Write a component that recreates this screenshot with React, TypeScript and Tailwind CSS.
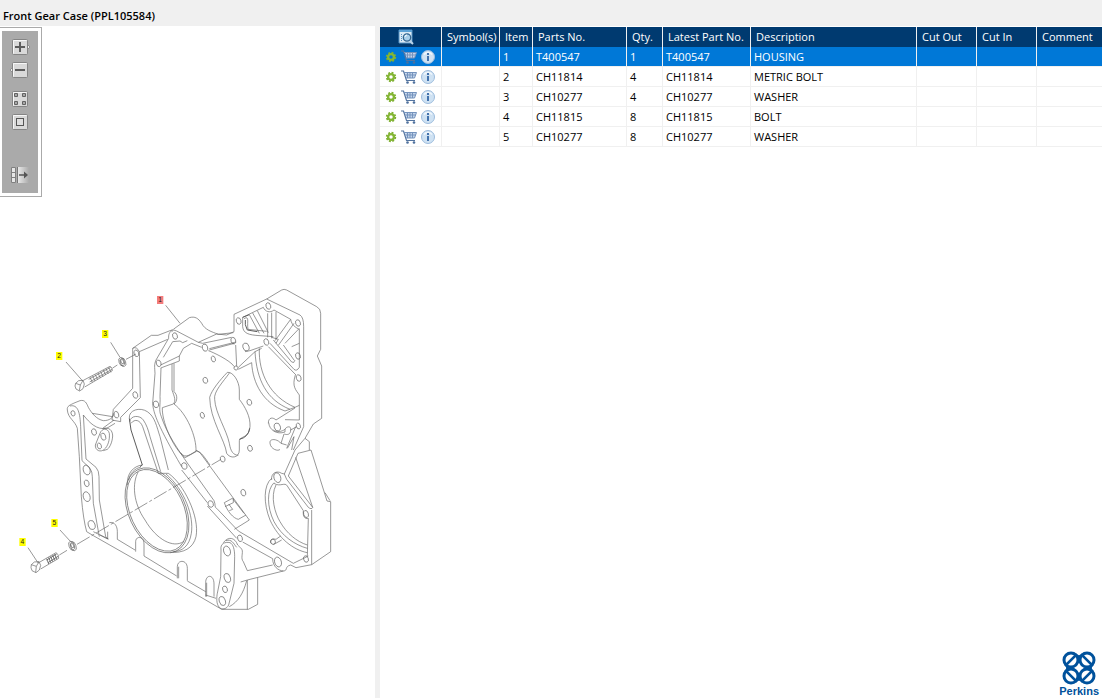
import type { ReactNode } from 'react'

type Part = {
  item: string
  partNo: string
  qty: string
  description: string
}

const parts: Part[] = [
  { item: '1', partNo: 'T400547', qty: '1', description: 'HOUSING' },
  { item: '2', partNo: 'CH11814', qty: '4', description: 'METRIC BOLT' },
  { item: '3', partNo: 'CH10277', qty: '4', description: 'WASHER' },
  { item: '4', partNo: 'CH11815', qty: '8', description: 'BOLT' },
  { item: '5', partNo: 'CH10277', qty: '8', description: 'WASHER' },
]

const headings = [
  'Symbol(s)',
  'Item',
  'Parts No.',
  'Qty.',
  'Latest Part No.',
  'Description',
  'Cut Out',
  'Cut In',
  'Comment',
]

function ToolButton({ label, children }: { label: string; children: ReactNode }) {
  return (
    <button type="button" aria-label={label} className="block size-4">
      <svg viewBox="0 0 16 16" className="size-4 overflow-visible">
        {children}
      </svg>
    </button>
  )
}

function Plate() {
  return (
    <>
      <rect x="0.5" y="0.5" width="15" height="15" rx="1" fill="#d9d9d9" stroke="#858585" />
      <path d="M1.5 14.5V1.5H14.5" fill="none" stroke="#f7f7f7" />
    </>
  )
}

function Toolbar() {
  return (
    <div className="mt-px w-[42px] self-start border-y border-r border-[#aaaaaa] py-[3px] pr-[3px] pl-[2px]">
      <div className="flex flex-col items-center gap-[13px] bg-[#aaaaaa] pt-2 pb-[10px]">
        <div className="flex flex-col gap-[7px]">
          <ToolButton label="Zoom in">
            <path d="M15 5l3 3-3 3z" fill="#eee" stroke="#909090" />
            <Plate />
            <path d="M8 3v10M3 8h10" stroke="#5c5c5c" strokeWidth="2" />
          </ToolButton>
          <ToolButton label="Zoom out">
            <path d="M1 5l-3 3 3 3z" fill="#eee" stroke="#909090" />
            <Plate />
            <path d="M3 8h10" stroke="#5c5c5c" strokeWidth="2" />
          </ToolButton>
        </div>
        <div className="flex flex-col gap-[7px]">
          <ToolButton label="Show thumbnails">
            <Plate />
            <path
              d="M2.500 2.500h3v3h-3zM10.500 2.500h3v3h-3zM2.500 10.500h3v3h-3zM10.500 10.500h3v3h-3z"
              fill="#a8a8a8"
              stroke="#626262"
            />
          </ToolButton>
          <ToolButton label="Fit to window">
            <Plate />
            <rect x="4.500" y="4.500" width="7" height="7" fill="#dedede" stroke="#555" />
          </ToolButton>
        </div>
        <div className="pt-6">
          <ToolButton label="Toggle parts list">
            <defs>
              <linearGradient id="fade">
                <stop offset="0" stopColor="#eeeeee" />
                <stop offset="1" stopColor="#aaaaaa" />
              </linearGradient>
            </defs>
            <rect x="5" y="0" width="12" height="16" fill="url(#fade)" />
            <path d="M-0.500 0.500h4v15h-4zM-0.500 5.500h4M-0.500 10.500h4" fill="#e6e6e6" stroke="#808080" />
            <path d="M5.500 0v16" stroke="#777" />
            <path d="M7 8h6" stroke="#555" strokeWidth="1.500" />
            <path d="M12 4.500l4 3.500-4 3.500z" fill="#555" />
          </ToolButton>
        </div>
      </div>
    </div>
  )
}

function GearIcon() {
  return (
    <svg viewBox="0 0 12 12" className="size-3">
      <circle cx="6" cy="6" r="4.300" fill="none" stroke="#7cae30" strokeWidth="1.800" strokeDasharray="1.900 1.477" />
      <circle cx="6" cy="6" r="2.900" fill="none" stroke="#84b634" strokeWidth="2.300" />
    </svg>
  )
}

function CartIcon() {
  return (
    <svg viewBox="0 0 16 14" className="h-[14px] w-4" fill="none">
      <path d="M4 2.500h11.500l-2 5.500H5.500z" fill="#c3d4ea" />
      <path d="M0 1h2.500l3 9.500h8.500" stroke="#5474a0" strokeWidth="1.200" />
      <path d="M3 2.500h12.500M4 5h11M5 8h8.500M6.500 2.500v5.500M9 2.500v5.500M11.500 2.500v5.500M15.500 2.500l-2 5.500" stroke="#7593bd" />
      <circle cx="6.500" cy="12.500" r="1.300" fill="#4e709c" />
      <circle cx="13" cy="12.500" r="1.300" fill="#4e709c" />
    </svg>
  )
}

function InfoIcon() {
  return (
    <svg viewBox="0 0 14 14" className="size-[14px]">
      <circle cx="7" cy="7" r="6.500" fill="#cfe2f3" stroke="#9dbcdc" />
      <path d="M3 4.500a5 5 0 0 1 8 0" fill="none" stroke="#eff6fc" strokeWidth="1.500" />
      <path d="M6 3h2v2H6zM6 6h2v5H6z" fill="#4272ad" />
    </svg>
  )
}

function PageSearchIcon() {
  return (
    <svg viewBox="0 0 16 16" className="size-4" fill="none">
      <path d="M1 1h13v13H1z" fill="#dcebf5" stroke="#5793c4" />
      <path d="M1 2h13" stroke="#5ea3d6" strokeWidth="2" />
      <path d="M3.500 5v8" stroke="#5793c4" strokeDasharray="1 1" />
      <path d="M11.500 11.500l3.500 3.500" stroke="#b8d3e8" strokeWidth="2" />
      <circle cx="9" cy="8.500" r="3.700" fill="#a9cfe9" stroke="#33658f" strokeWidth="1.300" />
      <path d="M7 8a2 2 0 0 1 2-2" stroke="#fff" />
    </svg>
  )
}

type Hole = [number, number, number, number]

function Holes({ items }: { items: Hole[] }) {
  return (
    <>
      {items.map(([x, y, rx, ry]) => (
        <ellipse key={`${x}-${y}`} cx={x} cy={y} rx={rx} ry={ry} transform={`rotate(-18 ${x} ${y})`} />
      ))}
    </>
  )
}

const callouts = [
  { no: '1', x: 471, y: 48, fill: '#f47c7c' },
  { no: '2', x: 168, y: 216, fill: '#ffff00' },
  { no: '3', x: 306, y: 150, fill: '#ffff00' },
  { no: '4', x: 58, y: 774, fill: '#ffff00' },
  { no: '5', x: 154, y: 717, fill: '#ffff00' },
]

// three drawing units to one pixel
function GearCaseDrawing() {
  return (
    <svg
      viewBox="0 0 1020 1005"
      role="img"
      aria-label="Front gear case, exploded view"
      className="mt-[83px] h-[335px] w-[340px] shrink-0"
      fill="none"
      stroke="#5c5c5c"
      strokeWidth="1.900"
      strokeLinejoin="round"
    >
      {/* upper bolt, washer and side rail */}
      <path d="M497 76L540 130M332 187L360 232M198 246L248 303" />
      <path d="M227 310l9-8 13-1 4 11-4 14-10 7-11-6-3-9zM227 310l14 5 8-14M241 315l-3 17" />
      <path d="M250 301L330 259Q338 262 337 272L254 321" />
      <path d="M270 292l7 15M278 288l7 15M286 284l7 15M294 279l7 15M302 275l7 15M310 270l7 15M318 266l7 15M326 262l7 15M266 298L332 262M269 306L336 268" />
      <path d="M338 264L352 255M378 238L408 222" />
      <Holes items={[[365, 245, 8, 13], [367, 245, 4, 7], [369, 247, 8, 13]]} />
      <path d="M398 205L454 166L474 166L518 149M398 205L398 325L340 388L336 420L362 425V412L421 353L418 215L503 178M398 205Q410 198 418 215" />
      <Holes items={[[409, 220, 7, 10], [406, 345, 7, 10], [349, 404, 7, 10]]} />

      {/* left arm and front opening */}
      <g transform="translate(180 330)">
        <path d="M22 60C20 48 30 45 45 38L60 32C75 28 80 40 85 52C95 70 110 88 130 92C150 92 160 82 162 70" />
        <path d="M22 60C24 85 45 92 52 115L58 200L64 320Q70 390 80 425L100 437L360 585" />
        <path d="M30 48C55 42 60 70 62 110L66 212L90 235Q97 245 97 260L100 340L118 440" />
        <path d="M70 75C90 100 110 120 140 115L165 100M70 75L78 207L108 232Q117 242 117 260L118 330L137 440L145 447L100 425" />
        <path d="M97 70L158 80M128 115L162 90" />
        <path d="M120 130C125 115 143 112 148 130C150 150 143 170 133 178C122 188 105 182 106 165Z" />
        <path d="M130 116C145 110 158 120 158 138C157 155 150 172 142 178L130 182" />
        <Holes
          items={[
            [39, 70, 6, 8], [102, 126, 7, 10], [130, 140, 7, 11], [118, 168, 6, 9],
            [80, 240, 10, 15], [80, 280, 7, 10], [80, 320, 10, 15], [95, 405, 10, 14],
          ]}
        />
        <path d="M208 85C205 60 240 50 262 65C285 80 290 110 300 140L325 240" />
        <path d="M209 95C212 75 240 75 250 90C260 105 265 120 270 140L302 245" />
        <path d="M213 100C225 85 240 90 248 110L295 250" />
        <path d="M208 85L213 120L247 225L240 230" strokeWidth="3" />
        <path d="M247 225C220 228 200 250 202 285M242 232C225 234 210 250 206 270" />
        <ellipse cx="291" cy="361" rx="85" ry="135" transform="rotate(-25 291 361)" />
        <ellipse cx="291" cy="361" rx="80" ry="130" transform="rotate(-25 291 361)" />
        <path d="M235 245C215 280 220 340 255 390C290 450 340 475 370 455" />
        <path d="M295 250L325 250C370 280 420 380 408 440C400 475 370 490 330 487" />
        <path d="M318 252C375 300 402 380 394 430C388 470 365 484 340 485" />
      </g>
      <path d="M323 755V777L300 765M328 728C345 724 352 740 352 755V778L405 810M407 815V785C407 767 432 767 432 792V828L530 888" />

      {/* lower bolt and washer */}
      <g transform="translate(0 510)">
        <path d="M84 293L115 340M180 240L212 275" />
        <path d="M94 344l9-8 14-1 5 11-4 14-10 8-12-6-3-9zM94 344l15 5 8-14M109 349l-2 18" />
        <path d="M118 337L168 308Q177 312 176 325L122 357" />
        <path d="M140 326l6 16M146 322l6 16M152 319l6 16M158 315l6 16M164 312l6 16M140 330L170 312M144 338L174 319" strokeWidth="2.500" />
        <Holes items={[[215, 287, 8, 14], [217, 287, 4, 7], [220, 289, 8, 14]]} />
      </g>
      <path d="M178 825L201 811M231 793L663 538" strokeDasharray="44 7 9 7" />

      {/* timing case flange and cover plate */}
      <g transform="translate(390 90)">
        <Holes items={[[86, 160, 7, 10], [78, 283, 8, 10], [163, 468, 8, 10], [278, 447, 7, 9], [360, 415, 7, 9]]} />
        <path d="M128 60C118 65 115 75 116 85L78 150C72 165 74 170 75 190L68 280C70 310 85 350 155 470" />
        <path d="M93 174L90 260C92 285 85 300 94 320C110 370 145 420 174 462" />
        <path d="M100 142L128 95L150 93L158 98L172 92M92 165L148 138L160 115L185 100L215 112M92 174L148 153V138" />
        <path d="M132 160V245C144 255 142 275 132 282M126 162V240C134 262 138 272 130 282L97 293" />
        <path d="M97 293C95 330 125 410 165 443L198 425C200 380 170 310 132 282M198 422C215 425 225 445 240 465" />
        <path d="M292 187C310 185 328 215 328 240V268C345 290 362 320 360 350C358 385 330 378 328 392V420C328 445 300 447 290 430C285 390 240 330 239 262C245 240 270 210 292 187" />
        <path d="M299 188C280 215 250 245 254 268C256 310 290 360 298 400C302 425 310 435 325 436" />
        <path d="M328 388Q355 382 359 355" strokeWidth="3" />
      </g>

      {/* top housing */}
      <g transform="translate(510 0)">
        <path d="M192 103L290 57L335 30Q342 26 350 30L440 80Q452 86 452 100V208L442 228L455 258V415L430 432L405 475L375 510" />
        <path d="M192 103V155L170 165L140 162M290 57L390 105Q401 112 401 140V440L370 510" />
        <path d="M10 148L58 113C75 108 85 115 95 130C105 150 125 155 145 163L190 158M140 162L85 187L20 153Q10 146 5 155" />
        <path d="M85 187L98 190L185 172M118 206L198 186M115 212C125 215 180 240 193 260M118 210L193 190" />
        <path d="M197 195L200 258M205 262L255 215L275 205M205 268L245 248M225 215L240 212L280 198" />
        <Holes
          items={[
            [15, 168, 7, 10], [295, 78, 7, 10], [206, 123, 7, 10], [384, 129, 7, 10], [190, 182, 7, 10],
            [228, 201, 9, 12], [289, 186, 7, 10], [105, 203, 8, 11], [130, 237, 6, 9], [106, 301, 7, 9],
            [97, 406, 6, 9], [238, 367, 7, 9], [384, 228, 7, 10], [386, 294, 7, 10], [385, 438, 6, 9],
            [322, 441, 9, 12], [198, 264, 6, 6],
          ]}
        />
        <path d="M218 112V140C220 160 235 165 270 167L310 170M218 112L280 82C285 95 300 100 312 90L362 118C365 140 385 145 390 150" />
        <path d="M222 116C240 105 230 130 234 148L290 154M238 104L268 160M248 99L282 160M262 92L295 158" />
        <path d="M218 112L238 104M226 120V134L232 150L262 155" strokeWidth="3" />
        <path d="M293 100V172M305 98V175M318 96V178M305 172L325 178L318 190M362 118L315 182M372 130L325 196M310 180L325 198" />
        <path d="M340 195L372 240M345 190L388 145M325 198L365 246Q372 252 375 240M365 200L388 190M300 190L372 268Q380 275 388 262M295 200L378 285" />
        <path d="M388 150V262M376 285C365 320 378 330 388 345V420L345 419" />
        <path d="M245 248C248 310 280 370 345 393M255 215C260 300 290 360 360 388M268 205C265 280 300 350 375 382L388 376" />
        <path d="M345 393L375 382M295 430C295 410 310 412 318 420L375 384" />
        <path d="M296 428C298 450 320 465 345 456V450C345 440 365 435 362 450C362 465 350 465 343 462M310 450C320 458 335 455 345 448M377 440L350 505M362 450L380 440" />
        <path d="M300 490C297 474 322 476 333 490L350 495M300 490C302 508 325 515 330 508M333 490L342 462M352 505L372 470L365 510M405 475L418 485V510" />
      </g>

      {/* lower right housing */}
      <g transform="translate(510 510)">
        <path d="M52 393L107 425M22 385V350C22 328 52 328 52 355V392M107 440V398C107 372 132 372 132 402V440M107 435L138 445" />
        <path d="M26 385V350M110 440V398" />
        <path d="M30 405L155 478H235L263 463V383M232 390V478" />
        <path d="M153 300C150 280 165 275 180 278C190 282 194 300 194 320L192 400L176 465C170 478 155 480 148 472C138 462 140 440 142 430L152 380Z" />
        <path d="M160 278C175 258 195 262 203 285L216 298C220 310 211 325 220 335L232 362L308 345M168 272C185 266 190 280 200 292" />
        <path d="M212 396L232 390L340 363M230 392C220 430 205 455 178 470" />
        <Holes
          items={[
            [171, 303, 10, 15], [172, 384, 9, 14], [165, 418, 7, 10], [157, 453, 9, 14], [210, 265, 7, 10],
            [122, 162, 8, 10], [220, 128, 7, 10], [324, 336, 10, 15], [408, 192, 7, 11],
            [408, 327, 7, 10], [322, 83, 10, 15],
          ]}
        />
        <path d="M35 60L112 158M54 42L132 152C138 165 132 172 140 175L205 243M112 168L200 265" />
        <path d="M32 8C45 30 65 10 80 2L90 8L238 210L193 238M163 158L187 145L222 190M163 158C172 185 190 205 205 208L228 195M190 145V158L165 170M176 162L188 178L178 182" />
        <path d="M205 243L370 340L415 318M218 276L308 326C308 350 325 362 340 363C355 362 342 350 362 345L378 353L425 344L482 305V155L471 153L423 0M465 128L480 152" />
        <path d="M425 180V344M415 205L412 318M375 0L343 72L350 88L415 172Q425 180 428 172L355 78L384 10L423 0M377 22L428 172" />
        <path d="M305 90C302 70 320 60 335 70L343 72M312 100C330 112 345 95 352 108L400 182C398 200 405 208 415 205" />
        <path d="M305 85C280 105 280 160 300 210C325 265 370 300 412 308M312 98C290 120 290 170 312 215C335 258 375 285 412 295M318 105C300 140 315 190 330 215C350 250 380 275 412 285" />
        <path d="M303 280C298 270 308 265 318 268L332 258M310 284L335 270" />
        <Holes items={[[309, 275, 7, 8]]} />
      </g>

      {callouts.map(({ no, x, y, fill }) => (
        <g key={no} stroke="none">
          <rect x={x} y={y} width="19" height="24" fill={fill} />
          <text x={x + 9} y={y + 19} textAnchor="middle" fontSize="20" fill="#222" className="font-['Liberation_Sans',sans-serif]">
            {no}
          </text>
        </g>
      ))}
    </svg>
  )
}

function PerkinsLogo() {
  return (
    <div className="mt-auto mr-[3px] flex flex-col items-center self-end text-[#00529c]">
      <svg viewBox="0 0 34 34" className="size-[34px]" fill="none" stroke="currentColor" strokeWidth="3">
        <circle cx="9" cy="9" r="7" />
        <circle cx="25" cy="9" r="7" />
        <circle cx="9" cy="25" r="7" />
        <circle cx="25" cy="25" r="7" />
        <path d="M4 14L14 4Q17 7 20 4L30 14Q27 17 30 20L20 30Q17 27 14 30L4 20Q7 17 4 14z" strokeWidth="2.500" />
      </svg>
      <span className="font-['Liberation_Sans',Arial,sans-serif] text-[11px] leading-[13px] font-bold">Perkins</span>
    </div>
  )
}

function PartsTable() {
  return (
    <table className="mt-px w-full table-fixed border-separate border-spacing-0 text-left text-[11px] leading-[19px]">
      <colgroup>
        <col className="w-[62px]" />
        <col className="w-[58px]" />
        <col className="w-[33px]" />
        <col className="w-[94px]" />
        <col className="w-[36px]" />
        <col className="w-[88px]" />
        <col className="w-[166px]" />
        <col className="w-[60px]" />
        <col className="w-[60px]" />
        <col />
      </colgroup>
      <thead>
        <tr className="h-5 bg-[#003a70] text-white">
          <th aria-label="Actions" className="border-r border-[#f0f0f0] p-0">
            <button type="button" aria-label="Find part" className="mx-auto block pr-[10px]">
              <PageSearchIcon />
            </button>
          </th>
          {headings.map((heading) => (
            <th
              key={heading}
              className="border-r border-[#f0f0f0] p-0 pb-px pl-[5px] font-normal whitespace-nowrap last:border-r-0"
            >
              {heading}
            </th>
          ))}
        </tr>
      </thead>
      <tbody className="[&_td]:h-5 [&_td]:border-r [&_td]:border-b [&_td]:border-[#f0f0f0] [&_td]:p-0 [&_td]:pl-[3px] [&_td:last-child]:border-r-0">
        {parts.map((part, i) => (
          <tr key={part.item} className={i === 0 ? 'bg-[#0078d7] text-white' : 'text-black'}>
            <td>
              <div className="flex h-[19px] items-center gap-1 pl-[2px]">
                <button type="button" aria-label={`Options for ${part.partNo}`}>
                  <GearIcon />
                </button>
                <button type="button" aria-label={`Add ${part.partNo} to cart`}>
                  <CartIcon />
                </button>
                <button type="button" aria-label={`About ${part.partNo}`}>
                  <InfoIcon />
                </button>
              </div>
            </td>
            <td />
            <td>{part.item}</td>
            <td>{part.partNo}</td>
            <td>{part.qty}</td>
            <td>{part.partNo}</td>
            <td>{part.description}</td>
            <td />
            <td />
            <td />
          </tr>
        ))}
      </tbody>
    </table>
  )
}

export default function App() {
  return (
    <div className="flex min-h-screen flex-col bg-white font-['Open_Sans','Noto_Sans',sans-serif] text-black">
      <header className="bg-[#f0f0f0] pt-[6px] pl-[3px]">
        <h1 className="text-[11px] leading-5 font-semibold">Front Gear Case (PPL105584)</h1>
      </header>
      <main className="flex flex-1">
        <section className="flex w-[375px] shrink-0 flex-col">
          <Toolbar />
          <GearCaseDrawing />
        </section>
        <div className="w-[5px] shrink-0 bg-[#f0f0f0]" />
        <section className="flex min-w-0 flex-1 flex-col">
          <PartsTable />
          <PerkinsLogo />
        </section>
      </main>
    </div>
  )
}
